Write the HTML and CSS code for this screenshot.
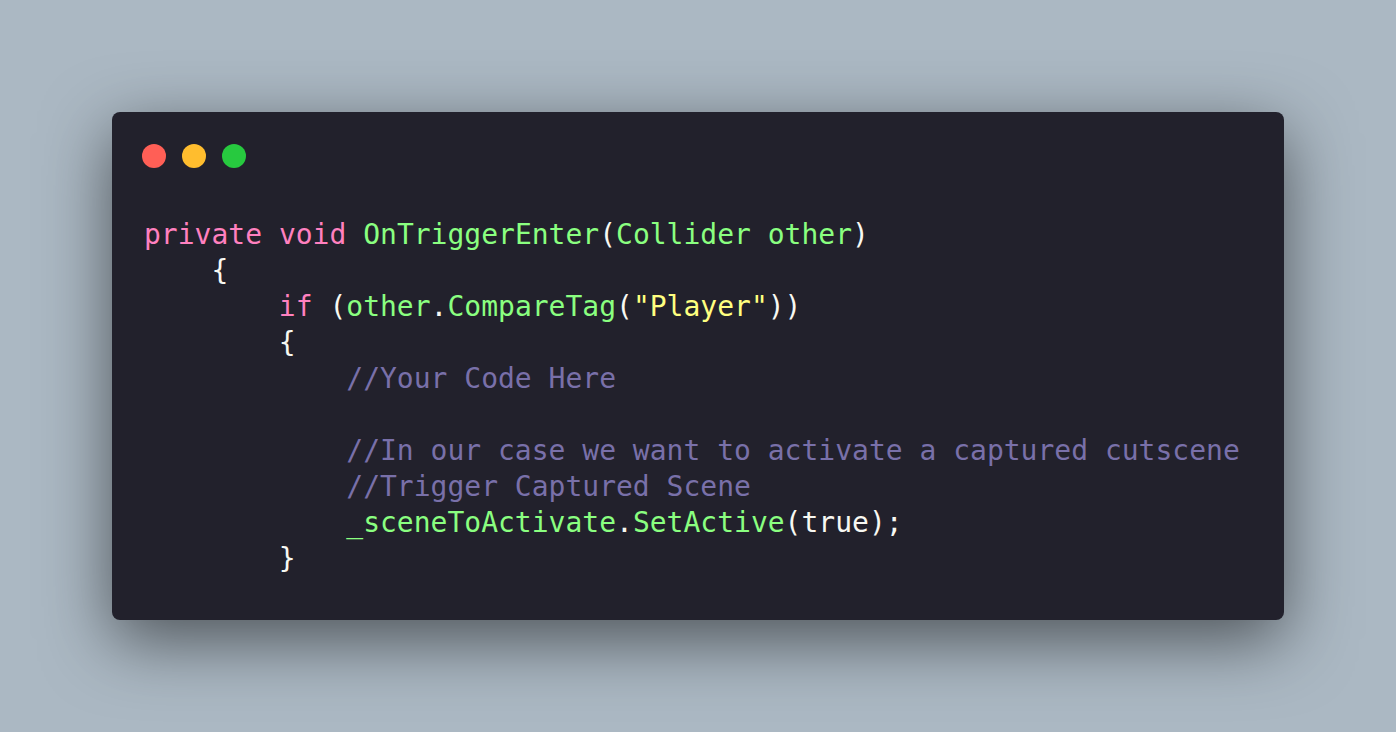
FILE: index.html
```html
<!DOCTYPE html>
<html>
<head>
<meta charset="utf-8">
<link rel="stylesheet" href="styles.css">
</head>
<body>
<div class="stage">
  <div class="window">
    <div class="controls">
      <span class="dot red"></span>
      <span class="dot yellow"></span>
      <span class="dot green"></span>
    </div>
<pre class="code"><span class="kw">private</span> <span class="kw">void</span> <span class="fn">OnTriggerEnter</span>(<span class="fn">Collider</span> <span class="fn">other</span>)
    {
        <span class="kw">if</span> (<span class="fn">other</span>.<span class="fn">CompareTag</span>(<span class="str">"Player"</span>))
        {
            <span class="cm">//Your Code Here</span>

            <span class="cm">//In our case we want to activate a captured cutscene</span>
            <span class="cm">//Trigger Captured Scene</span>
            <span class="fn">_sceneToActivate</span>.<span class="fn">SetActive</span>(true);
        }</pre>
  </div>
</div>
</body>
</html>
```

FILE: styles.css
```css
html, body {
  margin: 0;
  padding: 0;
}
body {
  background: #abb8c3;
  width: 1396px;
  height: 732px;
  overflow: hidden;
}
.stage {
  padding: 112px;
}
.window {
  background: #22212c;
  border-radius: 8px;
  box-shadow: rgba(0, 0, 0, 0.55) 0px 20px 68px;
  height: 508px;
  box-sizing: border-box;
  padding: 32px 30px 0 30px;
}
.controls {
  display: flex;
  gap: 16px;
  height: 24px;
}
.dot {
  width: 24px;
  height: 24px;
  border-radius: 50%;
  display: block;
}
.red { background: #ff5f56; }
.yellow { background: #ffbd2e; }
.green { background: #27c93f; }
.code {
  margin: 49px 0 0 2px;
  font-family: "DejaVu Sans Mono", monospace;
  font-size: 28px;
  line-height: 36px;
  color: #f8f8f2;
}
.kw { color: #ff80bf; }
.fn { color: #8aff80; }
.str { color: #ffff80; }
.cm { color: #7970a9; }
```
